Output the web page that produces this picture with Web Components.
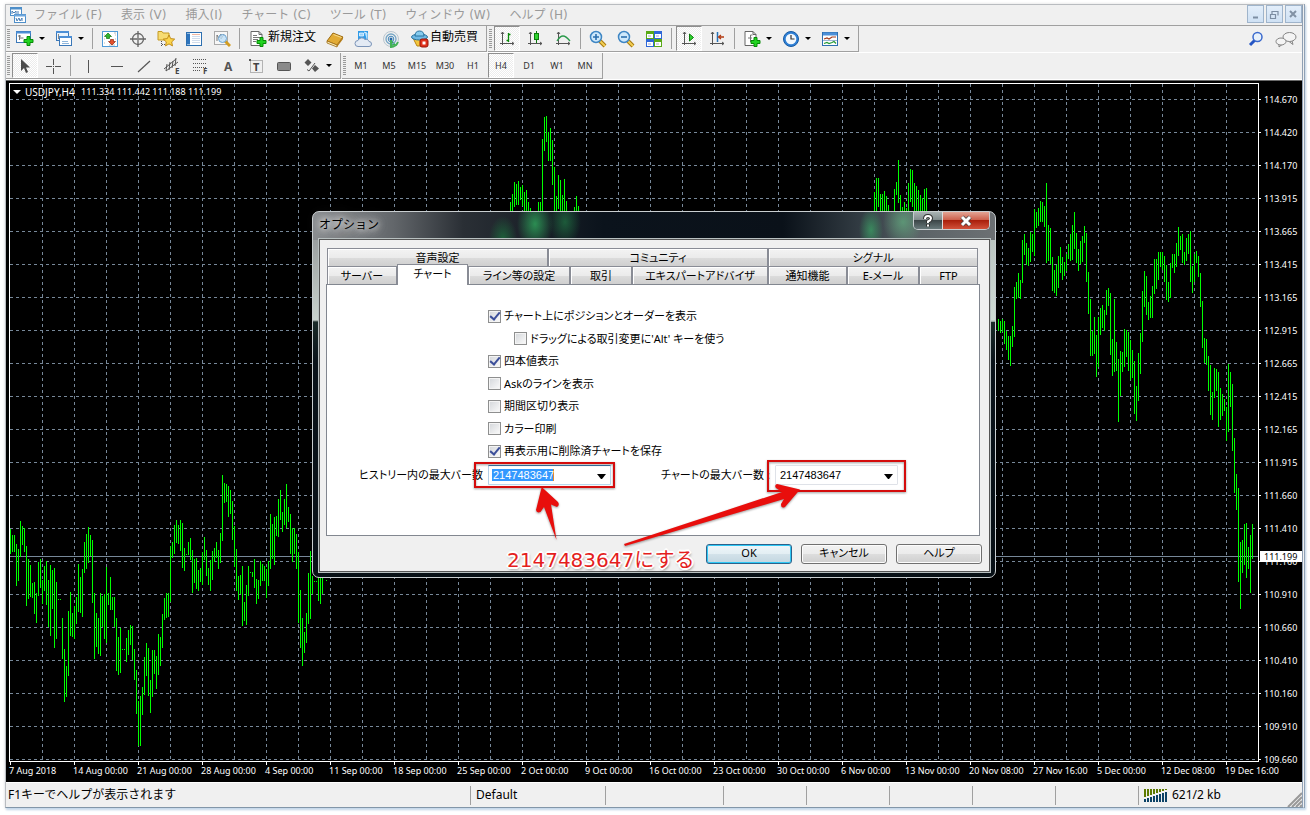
<!DOCTYPE html>
<html lang="ja">
<head>
<meta charset="utf-8">
<title>USDJPY,H4</title>
<style>
  html { background: #fff; }
  body {
    margin: 0; padding: 4px 5px 7px; box-sizing: border-box; height: 100vh; min-height: 700px;
    display: flex; font: 12px/16px "DejaVu Sans", "Noto Sans CJK JP", sans-serif; color: #000;
    --face: #f0f0f0; --line: #a0a0a0;
  }
</style>
</head>
<body>
<mt-window>
  <mt-menu-bar slot="bars"></mt-menu-bar>
  <mt-toolbar slot="bars">
    <mt-group>
      <mt-tool icon="newchart" name="新規チャート" drop></mt-tool><mt-tool icon="profiles" name="プロファイル" drop></mt-tool><mt-sep></mt-sep>
      <mt-tool icon="market" name="気配値"></mt-tool><mt-tool icon="target" name="データウィンドウ"></mt-tool><mt-tool icon="navigator" name="ナビゲーター"></mt-tool><mt-tool icon="terminal" name="ターミナル"></mt-tool><mt-tool icon="tester" name="ストラテジーテスター"></mt-tool><mt-sep></mt-sep>
      <mt-tool icon="order" name="新規注文" text></mt-tool><mt-tool icon="book" name="メタエディター"></mt-tool><mt-tool icon="cloud" name="クラウド"></mt-tool><mt-tool icon="signal" name="シグナル"></mt-tool><mt-tool icon="auto" name="自動売買" text></mt-tool>
    </mt-group>
    <mt-group>
      <mt-tool icon="bars" name="バーチャート" pressed></mt-tool><mt-tool icon="candle" name="ローソク足"></mt-tool><mt-tool icon="linechart" name="ラインチャート"></mt-tool><mt-sep></mt-sep>
      <mt-tool icon="zoomin" name="拡大"></mt-tool><mt-tool icon="zoomout" name="縮小"></mt-tool><mt-tool icon="tile" name="整列"></mt-tool><mt-sep></mt-sep>
      <mt-tool icon="scroll" name="自動スクロール" pressed></mt-tool><mt-tool icon="shift" name="チャートシフト"></mt-tool><mt-sep></mt-sep>
      <mt-tool icon="indicator" name="インディケータ" drop></mt-tool><mt-tool icon="clock" name="時間足設定" drop></mt-tool><mt-tool icon="template" name="定型チャート" drop></mt-tool>
    </mt-group>
    <mt-tool slot="end" icon="search" name="検索"></mt-tool><mt-tool slot="end" icon="chat" name="チャット"></mt-tool>
  </mt-toolbar>
  <mt-toolbar slot="bars">
    <mt-group>
      <mt-tool icon="pointer" name="カーソル" pressed></mt-tool><mt-tool icon="cross" name="クロスヘア"></mt-tool><mt-sep></mt-sep>
      <mt-tool icon="vline" name="垂直線"></mt-tool><mt-tool icon="hline" name="水平線"></mt-tool><mt-tool icon="trend" name="トレンドライン"></mt-tool><mt-tool icon="channel" name="チャネル"></mt-tool><mt-tool icon="fibo" name="フィボナッチ"></mt-tool><mt-tool icon="text" name="テキスト"></mt-tool><mt-tool icon="label" name="ラベル"></mt-tool><mt-tool icon="rect" name="長方形"></mt-tool><mt-tool icon="arrows" name="矢印" drop></mt-tool>
    </mt-group>
    <mt-group>
      <mt-tool name="M1" text></mt-tool><mt-tool name="M5" text></mt-tool><mt-tool name="M15" text></mt-tool><mt-tool name="M30" text></mt-tool><mt-tool name="H1" text></mt-tool><mt-tool name="H4" text pressed></mt-tool><mt-tool name="D1" text></mt-tool><mt-tool name="W1" text></mt-tool><mt-tool name="MN" text></mt-tool>
    </mt-group>
  </mt-toolbar>
  <mt-chart></mt-chart>
  <mt-status slot="status"></mt-status>
</mt-window>

<mt-dialog heading="オプション">
  <mt-tabs>
    <div slot="panel">
      <mt-chart-options></mt-chart-options>
    </div>
  </mt-tabs>
  <mt-button slot="actions" primary>OK</mt-button>
  <mt-button slot="actions">キャンセル</mt-button>
  <mt-button slot="actions">ヘルプ</mt-button>
  <mt-callout slot="notes">2147483647にする</mt-callout>
</mt-dialog>

<script>
const define = (name, css, html, ready) => customElements.define(name, class extends HTMLElement {
  constructor() {
    super();
    const t = document.createElement('template');
    const body = typeof html === 'function' ? html(this) : html;
    t.innerHTML = `<style>:host,*{box-sizing:border-box}${css}</style>${body}`;
    this.attachShadow({ mode: 'open' }).append(t.content.cloneNode(true));
    if (ready) ready(this, this.shadowRoot);
  }
});

/* ---------- icons, 18 x 18 grid ---------- */
const plus = (x, y) => `<path transform="translate(${x} ${y})" d="M3 .5h3v3h3v3H6v3H3v-3H0v-3h3z" fill="#21d321" stroke="#078a07"/>`;
const lens = '<path d="M11 11l5 5" stroke="#a87a10" stroke-width="4"/><path d="M11 11l5 5" stroke="#f3cf55" stroke-width="2"/><circle cx="7" cy="7" r="5.5" fill="#cfe9fb" stroke="#3f86c4" stroke-width="1.5"/>';
const axes = '<path d="M4.5 2v13M2 13.5h14M3 4l1.5-2 1.5 2M14 12l2 1.5-2 1.5" fill="none" stroke="#555"/>';
const sheet = '<path d="M2 1.5h8l3 3v11H2z" fill="#fff" stroke="#666"/><path d="M10 1.5v3h3" fill="none" stroke="#666"/>';
const ICONS = {
  app: '<rect x="1.5" y="1.5" width="11" height="8" fill="#fff" stroke="#4f8fc9"/><path d="M1 2.5h12" stroke="#4f8fc9" stroke-width="2"/><path d="M3 8V5l2 2 2-2v3M9 5v3" fill="none" stroke="#4a7fb5"/><rect x="5.5" y="8.5" width="11" height="8" fill="#fff" stroke="#4f8fc9"/><path d="M5 9.5h12" stroke="#6fa7dc" stroke-width="2"/><path d="M7 12l1 3 2-3 1 3 2-3v3" fill="none" stroke="#4a7fb5"/>',
  newchart: '<rect x=".5" y="1.5" width="14" height="11" fill="#fff" stroke="#3b78b8"/><path d="M0 2.5h15" stroke="#4c8fd6" stroke-width="2"/><path d="M3.5 5v5M3.5 8h4M2 6h3" stroke="#777"/>' + plus(8, 6),
  profiles: '<rect x="1.5" y="1.5" width="12" height="9" fill="#eaf4fd" stroke="#3b78b8"/><path d="M1 2h13" stroke="#4c8fd6" stroke-width="2"/><path d="M3.5 4v5" stroke="#888"/><rect x="4.5" y="6.5" width="12" height="9" fill="#fff" stroke="#3b78b8"/><path d="M4 7h13" stroke="#4c8fd6" stroke-width="2"/><path d="M7 13.5h7M7 11.5h6" stroke="#8fb6dc"/>',
  market: '<rect x="1.5" y="1.5" width="15" height="15" fill="#fff" stroke="#4f9bd8"/><path d="M3 9h1M3 13h1M3 5h1M14 5h1M14 9h1M13 3h2M8 15h6" stroke="#bbb"/><path d="M7 3l3.500 3.500H8.500v2h-3v-2H3.500z" fill="#2fb52f" stroke="#117511" stroke-width=".7"/><path d="M11 15l3.500-3.500h-2v-2h-3v2h-2z" fill="#e4502c" stroke="#94270f" stroke-width=".7"/>',
  target: '<circle cx="9" cy="9" r="5.5" fill="none" stroke="#666" stroke-width="1.3"/><path d="M9 1v7M9 10v7M1 9h7M10 9h7" stroke="#666" stroke-width="1.3"/><circle cx="9" cy="9" r="1" fill="#666"/>',
  navigator: '<path d="M1 3V1.5h4l1 1.5h6v7H1z" fill="#f7dc72" stroke="#c59a22"/><path d="M4.5 11v5M5 14.5h3" stroke="#555" stroke-dasharray="1 1"/><path d="M12 5l1.700 3.600 4 .5-3 2.800.8 4-3.500-2-3.500 2 .8-4-3-2.800 4-.5z" fill="#fbd44b" stroke="#bb8410" stroke-width=".9"/>',
  terminal: '<rect x="1.5" y="2.5" width="15" height="13" fill="#fff" stroke="#2d6fb0"/><path d="M2 3.5h3v11H2z" fill="#2d74bd"/><path d="M7 6.5h8M7 8.5h8M7 10.5h8M7 12.5h8" stroke="#d0dcec"/><path d="M7 4.5h8" stroke="#f1b6a0"/>',
  tester: '<rect x="1.5" y="1.5" width="13" height="13" fill="#f7f7f7" stroke="#aaa"/><path d="M4 11V5l2 3 2-4v5l3-5" fill="none" stroke="#777"/><g transform="translate(3 2)"><path d="M9 9l5 5" stroke="#d39c20" stroke-width="3"/><circle cx="6.5" cy="6.5" r="4" fill="#bfe0f8cc" stroke="#6ea6d4"/></g>',
  order: sheet + '<path d="M4 5.5h4M4 7.5h7M4 9.5h5M4 11.5h3" stroke="#777"/>' + plus(8, 7),
  book: '<path d="M1 11l6-8 10 4-6 8z" fill="#e2ab35" stroke="#9c6a10"/><path d="M1 11l10 4v2L1 13z" fill="#fff2c0" stroke="#9c6a10" stroke-width=".8"/><path d="M11 15l6-8v2l-6 8z" fill="#b67c16"/><path d="M7.5 4.5l8 3" stroke="#f9dc8c"/>',
  cloud: '<path d="M4 1h10v9H4z" fill="#2f9be8"/><path d="M5.500 3h4v3h-4zM10 2l3 1v6" fill="#9ad3fb" stroke="#fff" stroke-width=".7"/><path d="M4 16.500a3 3 0 010-6 4 4 0 017-1 3 3 0 014 2 2.500 2.500 0 010 5z" fill="#e3eaf4" stroke="#7b94b8"/>',
  signal: '<path d="M9 9l6 7H9z" fill="#37b34a"/><g fill="none"><circle cx="9" cy="9" r="7.5" stroke="#b9c6cf"/><circle cx="9" cy="9" r="5" stroke="#76a5c4" stroke-width="1.3"/><circle cx="9" cy="9" r="2.8" stroke="#4287bb"/></g><circle cx="9" cy="9" r="1.5" fill="#2566a4"/><path d="M9 10v7a8 8 0 007-5" fill="none" stroke="#43b256" stroke-width="2"/>',
  auto: '<path d="M2 8l4 8h8l2-7z" fill="#f4c63d" stroke="#b98512"/><ellipse cx="8.5" cy="7" rx="8" ry="3" fill="#6db8e4" stroke="#28729f"/><path d="M4 6q0-5 4.500-5T13 6z" fill="#86cbee" stroke="#28729f"/><rect x="9" y="9" width="8" height="8" rx="2" fill="#e0311c" stroke="#9b1408"/><rect x="11.5" y="11.5" width="3" height="3" fill="#fff"/>',
  bars: axes + '<path d="M10.5 3v9M10.5 4.5h2M8.5 10.5h2" stroke="#0a8a0a" fill="none" stroke-width="1.3"/>',
  candle: axes + '<path d="M10.5 1v12" stroke="#0a7a0a"/><rect x="8.5" y="3.5" width="4" height="6" fill="#2fd32f" stroke="#0a7a0a"/>',
  linechart: axes + '<path d="M3 11q3-5 6-5t7 5" fill="none" stroke="#2b9a4b" stroke-width="1.3"/>',
  zoomin: lens + '<path d="M4 7h6M7 4v6" stroke="#2c6fae" stroke-width="1.6"/>',
  zoomout: lens + '<path d="M4 7h6" stroke="#2c6fae" stroke-width="1.6"/>',
  tile: '<path d="M1 1h8v8H1zM9 9h8v8H9z" fill="#59a916"/><path d="M9 1h8v8H9zM1 9h8v8H1z" fill="#2f68d8"/><path d="M2 4h6v4H2zM10 4h6v4h-6zM2 12h6v4H2zM10 12h6v4h-6z" fill="#fff"/><path d="M3 6h3M11 6h3M3 14h3M11 14h3" stroke="#aac"/>',
  scroll: axes + '<path d="M9.5 4l4 3.500-4 3.500z" fill="#2fd32f" stroke="#0a7a0a"/>',
  shift: axes + '<path d="M9.5 2v10" stroke="#2572b8" stroke-width="1.5"/><path d="M16 7h-5M13 5l-2.500 2 2.500 2" fill="none" stroke="#b23a12" stroke-width="1.3"/>',
  indicator: sheet + '<path d="M7.500 5v7M5 8h4M7.500 5h2" fill="none" stroke="#777"/>' + plus(8, 7),
  clock: '<circle cx="9" cy="9" r="7.5" fill="#2f80d6" stroke="#175aa3"/><circle cx="9" cy="9" r="5.3" fill="#f3f8fd"/><path d="M9 5v4h3.500" fill="none" stroke="#333" stroke-width="1.2"/>',
  template: '<rect x="1.5" y="2.5" width="15" height="13" fill="#fff" stroke="#2d6fb0"/><path d="M2 4h14" stroke="#4c90d8" stroke-width="3"/><path d="M3 9l3-1 2 1 3-2h4" fill="none" stroke="#a33c1c" stroke-width="1.2"/><path d="M2 10.5h14" stroke="#9db7d5"/><path d="M3 13.5l3-1 2 1 3-1 2-1 2 2" fill="none" stroke="#249a35" stroke-width="1.2"/>',
  search: '<path d="M8 10l-5 5" stroke="#2555c4" stroke-width="3"/><circle cx="10.5" cy="7" r="4.5" fill="#e8f1fb" stroke="#3a69cd" stroke-width="1.5"/>',
  pointer: '<path d="M5 2v12l3-3 2 5 2-1-2-4.500h4z" fill="#4a4a4a"/>',
  cross: '<path d="M9.5 2v6M9.5 11v6M2 9.5h6M11 9.5h6" stroke="#555"/><path d="M9 9h1v1H9z" fill="#555"/>',
  vline: '<path d="M9.5 3v13" stroke="#555"/>', hline: '<path d="M4 9.5h12" stroke="#555"/>',
  trend: '<path d="M3 15L15 4" stroke="#555" stroke-width="1.2"/>',
  channel: '<path d="M1 12L13 2M3 14L15 5M4 7l-1 7M7 5l-1 8M10 4L9 11M13 1l-1 8" stroke="#555"/><text x="12" y="17" font-size="8" font-weight="700" fill="#444">E</text>',
  fibo: '<path d="M2 2.5h13M2 6.5h13M2 10.5h13M2 13.5h8" stroke="#555" stroke-dasharray="1 1"/><text x="12" y="17" font-size="8" font-weight="700" fill="#444">F</text>',
  text: '<text x="5" y="14" font-size="12" font-weight="700" fill="#555">A</text>',
  label: '<rect x="3.5" y="3.5" width="12" height="12" fill="none" stroke="#777" stroke-dasharray="1 1"/><path d="M2 2h2v2H2z" fill="#555"/><text x="6" y="14" font-size="11" font-weight="700" fill="#444">T</text>',
  rect: '<rect x="2.5" y="5.5" width="13" height="8" rx="1" fill="#8a8a8a" stroke="#555"/>',
  arrows: '<path d="M5 2l3.500 3.500L5 9 1.500 5.500zM12 8l4 3.500-4 3.500-3-3.500z" fill="#555"/><path d="M4 12.5l2 1.500 6-8" fill="none" stroke="#555"/>'
};
const CHAT = '<svg width="22" height="18" viewBox="0 0 22 18" aria-hidden="true"><g fill="#f4f4f4" stroke="#858585"><path d="M17 11l1 3.500-4-3"/><ellipse cx="14.500" cy="7" rx="6.500" ry="4.500"/><path d="M4 14l0 3 3-2.500"/><ellipse cx="6" cy="11.500" rx="5" ry="3.500"/></g></svg>';
const icon = n => n === 'chat' ? CHAT : `<svg width="18" height="18" viewBox="0 0 18 18" aria-hidden="true" font-family="Noto Sans">${ICONS[n] || ''}</svg>`;

/* ---------- application frame ---------- */
define('mt-window', `
  :host{flex:1;min-width:0;display:flex;flex-direction:column;background:var(--face);border:1px solid #b9bcc0;
    border-right:3px double #8fa0b4;border-bottom-color:#8296a8;box-shadow:1px 2px 2px #c3d7ea,0 0 3px #ddd}
  main{flex:1;display:flex;min-height:0;border-top:1px solid #696969}`,
  '<slot name="bars"></slot><main><slot></slot></main><slot name="status"></slot>');

define('mt-menu-bar', `
  :host{display:block;border-bottom:1px solid var(--line)}
  header{display:flex;align-items:center;height:20px;padding-left:3px}
  nav{display:flex;flex:1;gap:1px;margin-left:-2px}
  a{color:#9a9a9a;text-decoration:none;padding:0 9px;line-height:18px;white-space:nowrap}
  .box{display:flex;gap:2px;align-self:flex-start}
  button{width:17px;height:18px;padding:0;border:1px solid #9fb4cb;background:linear-gradient(#e3eefa,#cfe1f4);display:grid;place-items:center}
  svg{display:block}`,
  `<header>${icon('app')}<nav>${['ファイル (F)', '表示 (V)', '挿入(I)', 'チャート (C)', 'ツール (T)', 'ウィンドウ (W)', 'ヘルプ (H)'].map(t => `<a href="#">${t}</a>`).join('')}</nav>
   <div class="box"><button aria-label="最小化"><svg width="11" height="11"><path d="M3 8.5h5" stroke="#7d8ea3" stroke-width="2"/></svg></button>
   <button aria-label="元に戻す"><svg width="11" height="11"><path d="M3 2.5h6v4M1.5 5.5h5v4h-5zM3 2v3" fill="none" stroke="#7d8ea3" stroke-width="1.2"/></svg></button>
   <button aria-label="閉じる"><svg width="11" height="11"><path d="M2 2l6 6M8 2l-6 6" stroke="#8292a5" stroke-width="2"/></svg></button></div></header>`);

define('mt-toolbar', `
  :host{display:flex;height:27px;border-bottom:1px solid #fff}
  .end{margin-left:auto;display:flex;align-items:center;gap:2px;padding-right:2px}`,
  '<slot></slot><div class="end"><slot name="end"></slot></div>');

define('mt-group', `
  :host{display:flex;align-items:center;height:26px;padding-right:3px;border-right:1px solid var(--line);border-bottom:1px solid var(--line);margin-right:1px}
  i{width:3px;height:19px;margin:0 1px;background:repeating-linear-gradient(#9a9a9a 0 1px,var(--face) 1px 2px)}`,
  '<i></i><slot></slot>');

define('mt-sep', ':host{width:7px;height:21px;display:flex;justify-content:center}i{width:1px;background:var(--line)}', '<i></i>');

define('mt-tool', `
  :host{display:block}
  button{display:flex;align-items:center;justify-content:center;width:28px;height:25px;padding:0;border:1px solid transparent;background:none;color:#000;white-space:nowrap}
  svg{display:block;flex:none}
  :host([drop]) button{width:39px;justify-content:flex-start;padding-left:4px;gap:5px}
  :host([icon][text]) button{width:auto;min-width:78px;justify-content:flex-start;padding-left:5px;padding-right:2px}
  span{font:12px/20px "Noto Sans CJK JP",sans-serif;margin:0 0 5px 1px}
  :host(:not([icon])) span{font:9px/12px "Noto Sans",sans-serif;margin:0;color:#333}
  :host([pressed]) button{width:26px;margin:0 1px;background:repeating-conic-gradient(#fff 0 25%,#ececec 0 50%) 0 0/2px 2px;border-color:#8e8e8e #fff #fff #8e8e8e}`,
  el => {
    const n = el.getAttribute('name'), ic = el.getAttribute('icon');
    return `<button ${el.hasAttribute('text') ? '' : `aria-label="${n}"`}>${ic ? icon(ic) : ''}${el.hasAttribute('text') ? `<span>${n}</span>` : ''}${el.hasAttribute('drop') ? '<svg width="6" height="3"><path d="M0 0h6L3 3z"/></svg>' : ''}</button>`;
  });

/* ---------- chart ---------- */
const PRICES = '114.670 114.420 114.170 113.915 113.665 113.415 113.165 112.915 112.665 112.415 112.165 111.915 111.660 111.410 111.160 110.910 110.660 110.410 110.160 109.910 109.660'.split(' ');
const DATES = ['7 Aug 2018', '14 Aug 00:00', '21 Aug 00:00', '28 Aug 00:00', '4 Sep 00:00', '11 Sep 00:00', '18 Sep 00:00', '25 Sep 00:00', '2 Oct 00:00', '9 Oct 00:00', '16 Oct 00:00', '23 Oct 00:00', '30 Oct 00:00', '6 Nov 00:00', '13 Nov 00:00', '20 Nov 08:00', '27 Nov 16:00', '5 Dec 00:00', '12 Dec 08:00', '19 Dec 16:00'];
/* Runs of high-low bars, two pixels apart; heights in thirds of a pixel below y. "-" is a gap in the run. */
const RUNS = [
  { x: 0, y: 386, bars: '177-252 195-245 195-245 222-348 237-333 153-260 168-225 174-245 228-408 268-387 285-380 339-383 335-431 369-459 275-377 267-353 330-402 288-363 273-405 330-471 285-498 300-417 294-534 335-507 387-390 387-390 444-567 537-696 588-681 423-618 366-498 429-500 408-507 381-462 282-426 321-429 297-441 216-309 192-297 171-278 195-258 210-399 370-567 429-531 444-552 369-558 378-472 372-507 291-519 369-405 321-420 381-420 381-471 444-603 501-615 474-609 537-540 537-540 504-576 480-555 465-525 467-571 538-630 600-732 694-828 678-828 651-735 561-675 519-618 534-678 630-729 540-681 540-612 558-657 492-615 501-588 432-534 384-450 369-444 369-441 228-396 216-264 165-252 150-219 165-222 150-243 159-294 234-303 252-255 216-255 204-270 240-369 267-339 264-357 300-363 294-336 246-345 201-270 240-318 294-345 270-363 243-330 234-276 216-264 240-297 189-279 15-213 39-99 42-96 48-141 60-132 93-210 168-291 237-363 318-390 315-372 288-468 396-453 345-465 288-378 306-309 306-321 267-354 327-402 330-387 273-348 282-334 288-333 297-384 273-348 132-297 162-267 141-285 138-198 87-201 60-150 126-186 87-165 42-174 111-156 132-252 174-276 174-252 192-298 246-459 360-534 444-588 486-549 429-519 309-462 243-447 318-373 333-336 333-336 315-393 315-402 315-372 - 330-333' },
  { x: 500, y: 21, bars: '291-330 267-330 231-306 237-300 228-300 246-285 240-303 261-330 255-330 291-330 309-330 - - - 291-330 291-330 102-330 36-138 33-111 81-168 69-168 105-240 186-330 273-330 210-312 225-330 270-330 222-330 288-330 - - - 306-330 273-330 303-330' },
  { x: 864, y: 21, bars: '261-330 219-330 219-306 267-330 267-330 258-330 273-330 300-330 - - 252-330 231-270 165-294 270-330 306-330 291-330 309-330 234-330 192-291 195-306 234-330 243-330 255-330 270-330 279-330 252-330 249-330' },
  { x: 988, y: 66, bars: '507-543 513-549 507-546 513-582 543-600 558-630 558-648 528-591 411-561 396-447 369-444 390-447 270-399 252-315 279-345 294-348 246-336 252-306 177-318 186-234 174-228 153-216 156-216 168-231 99-339 225-333 234-342 321-423 360-429 345-438 318-414 291-369 321-390 336-378 312-363 282-327 252-333 225-330 186-297 249-339 297-363 273-342 258-336 228-279 249-396 366-492 447-618 543-618 501-612 555-681 501-651 474-555 465-534 480-543 420-495 414-468 429-615 567-678 447-666 576-663 627-816 603-738 606-666 537-651 540-621 546-663 570-690 600-684 633-792 708-813 609-753 549-672 423-576 363-471 378-495 456-510 438-504 408-504 327-432 327-417 306-390 306-351 306-360 318-396 345-450 396-456 339-444 312-354 312-369 279-351 231-318 258-300 252-339 306-345 264-333 252-312 243-396 348-429 312-396 303-339 318-381 369-471 453-594 564-639 567-645 618-723 645-795 726-810 654-744 657-723 666-831 714-810 732-798 747-783 771-873 642-846 666-771 702-903 864-1029 972-1080 1014-1296 1176-1377 1170-1269 1122-1245 1119-1284 1191-1257 1155-1329 1122-1227' }
];
const seq = (n, f) => Array.from({ length: n }, (_, k) => f(k)).join('');
const barPath = RUNS.map(r => r.bars.split(' ').map((b, k) => {
  if (b === '-') return '';
  const [a, z] = b.split('-').map(v => Math.round(r.y + v / 3));
  return `M${r.x + 2 * k} ${a}h1V${z}h-1z`;
}).join('')).join('');

define('mt-chart', `
  :host{flex:1;min-width:0;display:grid;grid-template-columns:minmax(0,1fr) 43px;grid-template-rows:minmax(0,1fr) 20px;
    background:#000;color:#fff;padding:2px 0 0 3px;font:9px/12px "Noto Sans",sans-serif;overflow:hidden}
  .plot{position:relative;border:1px solid #fff;overflow:hidden}
  .plot svg{display:block;width:100%;height:100%}
  .head{position:absolute;left:3px;top:2px;display:flex;gap:4px;align-items:center;white-space:pre}
  .head svg{width:8px;height:4px}
  .head b{font-weight:400;font-size:10px}
  .grid line{stroke:#778899;stroke-dasharray:3 3}
  ol{list-style:none;margin:0;padding:0}
  .price{grid-row:1/3;grid-column:2;position:relative}
  .price li{height:33px;display:flex;align-items:center;gap:3px}
  .price li::before{content:"";width:2px;height:1px;background:#fff}
  .price .now{position:absolute;left:1px;right:0;top:468px;padding-left:4px;display:block;height:11px;line-height:11px;background:#fff;color:#000}
  .price .now::before{display:none}
  .date{display:flex;min-width:0}
  .date li{flex:none;width:64px;white-space:nowrap;position:relative;padding-top:3px}
  .date li::before{content:"";position:absolute;left:1px;top:0;width:1px;height:3px;background:#fff}`,
  `<div class="plot"><svg shape-rendering="crispEdges" aria-hidden="true">
    <g class="grid">${seq(100, k => `<line x1="${32 * k + 32}.5" x2="${32 * k + 32}.5" y1="0" y2="100%"/>`)}${seq(40, k => `<line y1="${33 * k + 15}.5" y2="${33 * k + 15}.5" x1="0" x2="100%"/>`)}</g>
    <line x1="0" x2="100%" y1="472.5" y2="472.5" stroke="#778899"/>
    <path d="${barPath}" fill="#00ff00"/></svg>
    <div class="head"><svg viewBox="0 0 8 4"><path d="M0 0h8L4 4z" fill="#fff"/></svg><b>USDJPY,H4</b><span> 111.334 111.442 111.188 111.199</span></div></div>
   <ol class="price">${PRICES.map(p => `<li>${p}</li>`).join('')}<li class="now">111.199</li></ol>
   <ol class="date">${DATES.map(d => `<li>${d}</li>`).join('')}</ol>`);

define('mt-status', `
  :host{display:flex;align-items:center;height:25px;border-top:1px solid #fff;position:relative;font:12px/16px "Noto Sans","Noto Sans CJK JP",sans-serif}
  div{height:19px;border-left:1px solid var(--line);padding-left:5px;line-height:18px;white-space:nowrap}
  .help{border:0;flex:1;padding-left:2px}
  .d{width:135px}.a{width:118px}.b{width:83px}
  .net{width:164px;display:flex;align-items:center;gap:4px}
  .grip{position:absolute;right:0;bottom:0}`,
  `<div class="help">F1キーでヘルプが表示されます</div><div class="d">Default</div><div class="a"></div><div class="b"></div><div class="b"></div><div class="b"></div><div class="b"></div><div class="b"></div>
   <div class="net"><svg width="24" height="13" shape-rendering="crispEdges">${seq(8, k => `<path d="M${3 * k} 0h2v${8 - k}h-2z" fill="#5d7a00"/><path d="M${3 * k} ${10 - k}h2V13h-2z" fill="#0b4266"/>`)}</svg><span>621/2 kb</span></div>
   <svg class="grip" width="15" height="15"><path d="M1 15L15 1M5 15L15 5M9 15L15 9M13 15l2-2" stroke="#999" stroke-width="2"/></svg>`);

/* ---------- options dialog ---------- */
define('mt-dialog', `
  :host{position:absolute;left:calc(50% - 343px);top:211px;width:684px;padding:0 5px 5px 6px;border:1px solid #c9ced0;border-radius:7px;
    display:block;font:11px/16px "Noto Sans","Noto Sans CJK JP",sans-serif;font-feature-settings:"palt";
    background:
      linear-gradient(90deg,#0000 6px,#0000 670px,#d5e4dc88 676px) 0 28px/100% 82px no-repeat,
      radial-gradient(ellipse 18px 26px at 222px 12px,#2b8d52,#0000),
      radial-gradient(ellipse 16px 24px at 252px 10px,#1f6b40cc,#0000),
      radial-gradient(ellipse 14px 22px at 190px 26px,#1d6b3dcc,#0000),
      radial-gradient(ellipse 12px 22px at 558px 18px,#3b9a63cc,#0000),
      radial-gradient(ellipse 20px 24px at 590px 10px,#5fa37bcc,#0000),
      linear-gradient(90deg,#8a8d90 0,#63676b 80px,#2a2f35 150px,#0b131c 290px,#0a1119 470px,#39434a 560px,#5a6266 600px,#6c7073) 0 0/100% 28px no-repeat,
      linear-gradient(#8b8e91,#c9d2cd 108px,#1a2a28 110px,#0a131a 150px,#081016) }
  header{display:flex;height:27px}
  h1{font:12px/25px "Noto Sans","Noto Sans CJK JP",sans-serif;margin:0;flex:1}
  h1 span{display:inline-block;text-shadow:0 0 6px #fff,0 0 8px #ddd,0 0 10px #ccc,0 0 14px #bbb}
  .box{display:flex;height:18px;border:1px solid #c8cdd0;border-top:0;border-radius:0 0 5px 5px;overflow:hidden}
  button{border:0;padding:0;width:28px;color:#fff;background:linear-gradient(#a9b3b3,#7f8a8b 48%,#3c4648 50%,#68787a);display:grid;place-items:center}
  button+button{width:47px;border-left:1px solid #ddd;background:linear-gradient(#e3a494,#cc5d49 48%,#a91f0c 50%,#d2513a)}
  .client{border:1px solid #555;outline:1px solid #b8c0c0;background:var(--face);padding:8px 9px 7px 6px;height:333px;display:flex;flex-direction:column;gap:8px}
  footer{display:flex;justify-content:flex-end;gap:9px;margin-right:-2px}`,
  el => `<header><h1><span>${el.getAttribute('heading')}</span></h1><div class="box">
    <button aria-label="ヘルプ"><svg width="12" height="14"><path d="M3 5q0-3 3-3t3 2.500q0 1.500-3 3V9M6 10v2.500" fill="none" stroke="#333" stroke-width="4"/><path d="M3 5q0-3 3-3t3 2.500q0 1.500-3 3V9M6 10.500v2" fill="none" stroke="#fff" stroke-width="2"/></svg></button>
    <button aria-label="閉じる"><svg width="14" height="12"><path d="M3 2l8 8M11 2l-8 8" stroke="#444" stroke-width="4.5"/><path d="M3 2l8 8M11 2l-8 8" stroke="#fff" stroke-width="3"/></svg></button></div></header>
    <div class="client"><slot></slot><footer><slot name="actions"></slot></footer></div><slot name="notes"></slot>`);

define('mt-tabs', `
  :host{display:flex;flex-direction:column;flex:1;min-height:0}
  .row{display:flex;height:18px;margin:0 1px}
  button{font:inherit;line-height:16px;color:#000;padding:0;border:1px solid #898c95;border-bottom:0;
    background:linear-gradient(#f3f3f3,#ebebeb 50%,#dcdcdc 52%,#cfcfcf);box-shadow:inset 1px 1px #fff;white-space:nowrap;flex:none}
  .on{background:#fff;height:21px;margin-top:-2px;z-index:1;padding-bottom:3px;box-shadow:none}
  .panel{flex:1;border:1px solid #828790;background:#fff}`,
  (() => {
    const b = ([t, w, on]) => `<button role="tab" style="width:${w}px" ${on ? 'class="on" aria-selected="true"' : ''}>${t}</button>`;
    return `<div class="row">${[['音声設定', 221], ['コミュニティ', 220], ['シグナル', 210]].map(b).join('')}</div>
      <div class="row">${[['サーバー', 70], ['チャート', 71, 1], ['ライン等の設定', 102], ['取引', 62], ['エキスパートアドバイザ', 136], ['通知機能', 79], ['E-メール', 72], ['FTP', 59]].map(b).join('')}</div>
      <div class="panel"><slot name="panel"></slot></div>`;
  })());

define('mt-check', `
  :host{display:flex;align-items:center;height:22px}
  :host([nested]){padding-left:26px}
  label{display:flex;align-items:center;gap:3px;white-space:nowrap}
  input{appearance:none;margin:0;width:13px;height:13px;border:1px solid #8e8f8f;background:linear-gradient(135deg,#d3d6da,#fbfbfb);box-shadow:inset 0 0 0 1px #f4f4f4;display:grid;place-items:center}
  input:checked::before{content:"";width:4px;height:8px;border:solid #3c4f9a;border-width:0 2px 2px 0;transform:rotate(40deg);margin-top:-2px}`,
  el => `<label><input type="checkbox" ${el.hasAttribute('checked') ? 'checked' : ''}><span>${el.getAttribute('label')}</span></label>`);

define('mt-combo', `
  :host{display:flex;align-items:center}
  label{white-space:nowrap;width:121px}
  :host(:not([active])) label{width:106px}
  .field{position:relative;margin-left:8px}
  select{appearance:none;display:block;width:123px;height:20px;padding:0 0 1px 4px;border:1px solid #dfe2e8;border-radius:1px;background:#fff;color:#000;font:11px/16px "Liberation Sans",sans-serif}
  svg{position:absolute;right:5px;top:9px;pointer-events:none}
  :host([active]) select{border-color:#3d7bad #b7d9ed #b7d9ed #b5cfe7;color:#fff;
    background:linear-gradient(#e28a2d,#e28a2d) 64px 3px/1px 12px no-repeat,linear-gradient(#3399ff,#3399ff) 3px 3px/61px 12px no-repeat,#fff}`,
  el => `<label for="v">${el.getAttribute('label')}</label><div class="field"><select id="v"><option>2147483647</option></select><svg width="9" height="5"><path d="M0 0h9L5 5H4z"/></svg></div>`);

define('mt-chart-options', `
  :host{display:block;padding-top:20px}
  .checks{display:flex;flex-direction:column;justify-content:space-between;height:157px;margin-left:161px}
  .sizes{display:flex;gap:50px;margin:3px 0 0 32px}`,
  `<div class="checks">
    <mt-check checked label="チャート上にポジションとオーダーを表示"></mt-check>
    <mt-check nested label="ドラッグによる取引変更に'Alt' キーを使う"></mt-check>
    <mt-check checked label="四本値表示"></mt-check>
    <mt-check label="Askのラインを表示"></mt-check>
    <mt-check label="期間区切り表示"></mt-check>
    <mt-check label="カラー印刷"></mt-check>
    <mt-check checked label="再表示用に削除済チャートを保存"></mt-check></div>
   <div class="sizes"><mt-combo active label="ヒストリー内の最大バー数"></mt-combo><mt-combo label="チャートの最大バー数 :"></mt-combo></div>`);

define('mt-button', `
  button{width:86px;height:20px;padding:0 0 2px;font:inherit;line-height:16px;color:#000;border:1px solid #707070;border-radius:3px;
    background:linear-gradient(#f2f2f2,#ebebeb 50%,#dddddd 50%,#cfcfcf);box-shadow:inset 0 0 0 1px #fcfcfc}
  :host{display:flex}
  :host([primary]) button{border-color:#2c628b;box-shadow:inset 0 0 0 1px #2fc8f5;background:linear-gradient(#eef6fa,#e3eef3 50%,#d3e2ea 50%,#c3d6e0)}`,
  '<button><slot></slot></button>');

/* Red marks laid over the dialog; the drawing shares the window's coordinates. */
define('mt-callout', `
  :host{position:absolute;inset:-1px;pointer-events:none;display:block;font-feature-settings:normal}
  svg{display:block;width:100%;height:100%;filter:drop-shadow(0 1px 1px #0006)}
  p{position:absolute;left:195px;top:337px;margin:0;font:20px/24px "DejaVu Sans","Noto Sans CJK JP",sans-serif;color:#e41e1e;white-space:nowrap;
    text-shadow:1px 1px #fff,-1px -1px #fff,1px -1px #fff,-1px 1px #fff,2px 0 #fff,-2px 0 #fff,0 2px #fff,0 -2px #fff,1px 2px 3px #555}`,
  `<svg viewBox="312 211 684 367" aria-hidden="true"><g fill="none" stroke="#d40c0c" stroke-width="2"><path d="M475 463h139v24H475z"/><path d="M768 461h137v30H768z"/></g>
   <g fill="#e80e0c"><path d="M541.7 487L558 502q2 3-1 5L551 504.5 556.5 540 544 507l-3.5 5q-4 1.5-4.5-2z"/>
   <path d="M800 489.5L777 484q-3 1-1 4l6 4L624 544l1 2 159-47-3 5q0 5 4 3z"/></g></svg><p><slot></slot></p>`);
</script>
</body>
</html>
